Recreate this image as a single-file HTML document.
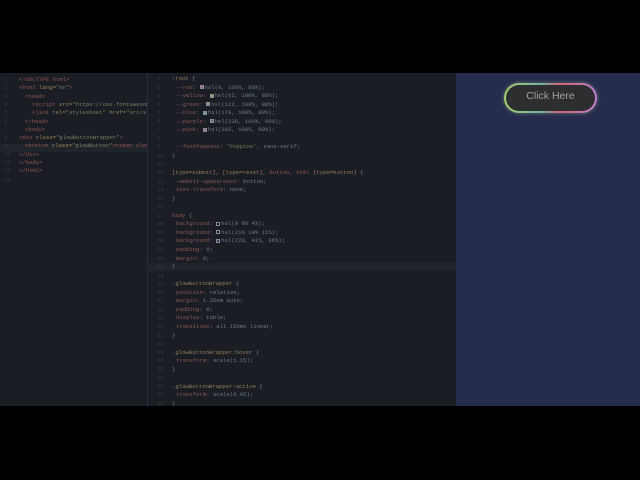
<!DOCTYPE html>
<html><head><meta charset="utf-8"><style>
*{margin:0;padding:0;box-sizing:border-box}
body{width:640px;height:480px;background:#000;position:relative;overflow:hidden;font-family:"Liberation Mono",monospace;font-size:5.6px;color:#8a9098}
.ed{position:absolute;top:73px;height:333px;background:#1a1e24}
.l{position:absolute;white-space:pre;opacity:.8}
.n{color:#3a414a}
.t{color:#b0605a}.a{color:#b89a66}.s{color:#85996a}.p{color:#a86460}.v{color:#80929f}.c{color:#b09468}
.sw{display:inline-block;width:4px;height:4px;vertical-align:-0.5px;margin-right:1px;border:0.5px solid #aaa}
</style></head><body>
<div class="ed" style="left:0;width:147px"></div>
<div class="ed" style="left:147px;width:309px;border-left:1px solid #2a3038"></div>
<div style="position:absolute;left:0;top:144px;width:147px;height:8px;background:#20252c"></div>
<div style="position:absolute;left:147px;top:263px;width:309px;height:8px;background:#20252c"></div>
<div style="position:absolute;left:456px;top:73px;width:184px;height:333px;background:#262c4e"></div>
<div id="L" style="position:absolute;left:0;top:76px;width:147px;height:110px;overflow:hidden"></div>
<div id="R" style="position:absolute;left:147px;top:75px;width:309px;height:331px;overflow:hidden"></div>
<div style="position:absolute;left:504px;top:83px;width:93px;height:30px;border-radius:15px;box-shadow:0 0 4px rgba(160,200,140,.5)"></div>
<div style="position:absolute;left:504px;top:83px;width:93px;height:30px;border-radius:15px;border:2px solid transparent;background:linear-gradient(#2c2e30,#2c2e30) padding-box,linear-gradient(90deg,#a8d070,#70b0a0 40%,#d06070 60%,#c080d0) border-box"></div>
<div style="position:absolute;left:504px;top:90px;width:93px;text-align:center;font-family:'Liberation Sans',sans-serif;font-size:10.5px;color:#a0a0a0">Click Here</div>
<script>
var L=[['<span class="t">&lt;!DOCTYPE html&gt;</span>',19],['<span class="t">&lt;html</span> <span class="a">lang=</span><span class="s">"en"</span><span class="t">&gt;</span>',19],['<span class="t">&lt;head&gt;</span>',25],['<span class="t">&lt;script</span> <span class="a">src=</span><span class="s">"https://use.fontawesome</span>',32],['<span class="t">&lt;link</span> <span class="a">rel=</span><span class="s">"stylesheet"</span> <span class="a">href=</span><span class="s">"src/sty</span>',32],['<span class="t">&lt;/head&gt;</span>',25],['<span class="t">&lt;body&gt;</span>',25],['<span class="t">&lt;div</span> <span class="a">class=</span><span class="s">"glowButtonWrapper"</span><span class="t">&gt;</span>',19],['<span class="t">&lt;button</span> <span class="a">class=</span><span class="s">"glowButton"</span><span class="t">&gt;&lt;span class</span>',25],['<span class="t">&lt;/div&gt;</span>',19],['<span class="t">&lt;/body&gt;</span>',19],['<span class="t">&lt;/html&gt;</span>',19],['',0]];
var h='';L.forEach(function(x,i){h+='<div class="l n" style="left:4px;top:'+(i*8.3)+'px">'+(i+1)+'</div><div class="l" style="left:'+x[1]+'px;top:'+(i*8.3)+'px">'+x[0]+'</div>'});
document.getElementById('L').innerHTML=h;
function sw(c){return '<span class="sw" style="background:'+c+'"></span>'}
var R=[
['<span class="c">:root</span> {',0],
['<span class="p">--red:</span> '+sw('#c08090')+'<span class="v">hsl(0, 100%, 80%)</span>;',4],
['<span class="p">--yellow:</span> '+sw('#c0c080')+'<span class="v">hsl(62, 100%, 80%)</span>;',4],
['<span class="p">--green:</span> '+sw('#80c080')+'<span class="v">hsl(122, 100%, 80%)</span>;',4],
['<span class="p">--blue:</span> '+sw('#80c0c0')+'<span class="v">hsl(179, 100%, 80%)</span>;',4],
['<span class="p">--purple:</span> '+sw('#8080c0')+'<span class="v">hsl(238, 100%, 80%)</span>;',4],
['<span class="p">--pink:</span> '+sw('#c080b0')+'<span class="v">hsl(302, 100%, 80%)</span>;',4],
['',0],
['<span class="p">--fontPoppins:</span> <span class="s">\'Poppins\'</span>, <span class="v">sans-serif</span>;',4],
['}',0],['',0],
['<span class="c">[type=submit], [type=reset],</span> <span class="t">button, html</span> <span class="c">[type=button]</span> {',0],
['<span class="p">-webkit-appearance:</span> <span class="v">button</span>;',4],
['<span class="p">text-transform:</span> <span class="v">none</span>;',4],
['}',0],['',0],
['<span class="t">body</span> {',0],
['<span class="p">background:</span> '+sw('#0a0a0a')+'<span class="v">hsl(0 0% 4%)</span>;',4],
['<span class="p">background:</span> '+sw('#151a20')+'<span class="v">hsl(210 14% 11%)</span>;',4],
['<span class="p">background:</span> '+sw('#363d78')+'<span class="v">hsl(228, 41%, 36%)</span>;',4],
['<span class="p">padding:</span> <span class="v">0</span>;',4],
['<span class="p">margin:</span> <span class="v">0</span>;',4],
['}',0],['',0],
['<span class="c">.glowButtonWrapper</span> {',0],
['<span class="p">position:</span> <span class="v">relative</span>;',4],
['<span class="p">margin:</span> <span class="v">1.25em auto</span>;',4],
['<span class="p">padding:</span> <span class="v">0</span>;',4],
['<span class="p">display:</span> <span class="v">table</span>;',4],
['<span class="p">transition:</span> <span class="v">all 150ms linear</span>;',4],
['}',0],['',0],
['<span class="c">.glowButtonWrapper:hover</span> {',0],
['<span class="p">transform:</span> <span class="v">scale(1.15)</span>;',4],
['}',0],['',0],
['<span class="c">.glowButtonWrapper:active</span> {',0],
['<span class="p">transform:</span> <span class="v">scale(0.95)</span>;',4],
['}',0]];
h='';R.forEach(function(x,i){h+='<div class="l n" style="left:10px;top:'+(i*8.55)+'px">'+(i+1)+'</div><div class="l" style="left:'+(25+x[1])+'px;top:'+(i*8.55)+'px">'+x[0]+'</div>'});
document.getElementById('R').innerHTML=h;
</script>
</body></html>
